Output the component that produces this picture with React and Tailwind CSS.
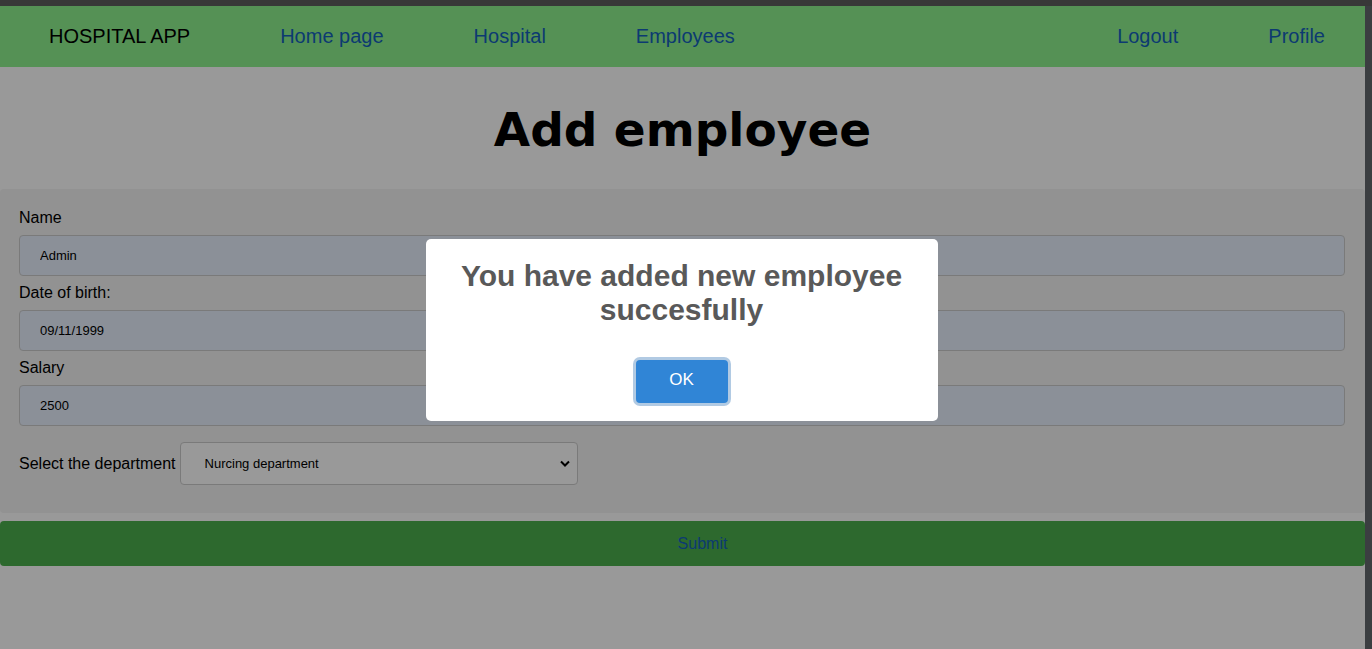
import { useState } from 'react';

const navLinks = ['Home page', 'Hospital', 'Employees'];

function Field({ label, value }) {
  return (
    <div className="mb-[8px]">
      <label className="block text-[16px] leading-[18px] text-black">{label}</label>
      <input
        readOnly
        value={value}
        className="mt-[8px] block w-full h-[41px] pl-[20px] text-[13px] text-black bg-[#e8f0fe] border border-[#cccccc] rounded-[4px] outline-none"
      />
    </div>
  );
}

function SuccessModal({ onClose }) {
  return (
    <div className="absolute inset-0 bg-black/40 flex items-center justify-center pt-[5px] pr-[2px]">
      <div className="w-[512px] bg-white rounded-[5px] px-[20px] pt-[20px] pb-[18px] flex flex-col items-center">
        <h2 className="text-[30px] leading-[34px] font-bold text-[#595959] text-center">
          You have added new employee succesfully
        </h2>
        <button
          onClick={onClose}
          className="mt-[33px] w-[92px] h-[43px] pb-[3px] bg-[#3085d6] text-white text-[17px] rounded-[4px] shadow-[0_0_0_3px_rgba(100,150,200,0.5)]"
        >
          OK
        </button>
      </div>
    </div>
  );
}

export default function App() {
  const [showModal, setShowModal] = useState(true);

  return (
    <div className="h-[649px] overflow-hidden bg-[#383838] font-['Liberation_Sans',Arial,sans-serif]">
      <div className="h-[6px]" />
      <div className="flex h-[643px]">
        <div className="relative flex-1 bg-white">
          <nav className="h-[61px] pb-[2px] bg-[#8ef28e] flex items-center text-[20px]">
            <span className="ml-[49px] text-black">HOSPITAL APP</span>
            <div className="ml-[90px] flex gap-[90px]">
              {navLinks.map(l => (
                <a key={l} className="text-[#1462bd]">{l}</a>
              ))}
            </div>
            <div className="ml-auto mr-[40px] flex gap-[90px]">
              <a className="text-[#1462bd]">Logout</a>
              <a className="text-[#1462bd]">Profile</a>
            </div>
          </nav>

          <div className="h-[122px] pt-[4px] flex items-center justify-center">
            <h1 className="font-['DejaVu_Sans',Verdana,sans-serif] font-bold text-[47px] text-black">Add employee</h1>
          </div>

          <form className="bg-[#f3f3f3] rounded-[4px] pt-[20px] pl-[19px] pr-[20px] pb-[28px]">
            <Field label="Name" value="Admin" />
            <Field label="Date of birth:" value="09/11/1999" />
            <Field label="Salary" value="2500" />
            <div className="mt-[16px] flex items-center gap-[4px]">
              <label className="text-[16px] text-black">Select the department</label>
              <div className="relative w-[398px] h-[43px]">
                <select className="appearance-none w-full h-full pl-[24px] text-[13px] text-black bg-white border border-[#cccccc] rounded-[4px] outline-none">
                  <option>Nurcing department</option>
                </select>
                <svg className="absolute right-[8px] top-[18px] w-[10px] h-[7px]" viewBox="0 0 10 7">
                  <path d="M1 1.5 L5 5.5 L9 1.5" stroke="#000" strokeWidth="2" fill="none" />
                </svg>
              </div>
            </div>
          </form>

          <button
            type="button"
            className="mt-[8px] block w-full h-[45px] pl-[40px] bg-[#4caf4d] rounded-[4px] text-[16px] text-[#1462bd]"
          >
            Submit
          </button>

          {showModal && <SuccessModal onClose={() => setShowModal(false)} />}
        </div>
        <div className="w-[7px] bg-[#3b3e41]" />
      </div>
    </div>
  );
}
